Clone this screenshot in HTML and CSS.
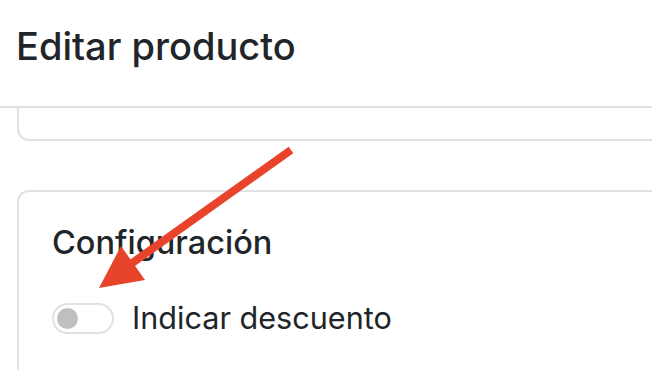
FILE: index.html
```html
<!DOCTYPE html>
<html lang="es">
<head>
<meta charset="utf-8">
<title>Editar producto</title>
<link rel="stylesheet" href="styles.css">
</head>
<body>
<div class="page">
  <header class="page-header">
    <h1 class="page-title">Editar producto</h1>
  </header>
  <main class="content">
    <section class="card card-cut"></section>
    <section class="card card-config">
      <h2 class="card-title">Configuración</h2>
      <label class="switch-row">
        <span class="switch"><span class="switch-knob"></span></span>
        <span class="switch-label">Indicar descuento</span>
      </label>
    </section>
  </main>
  <svg class="annotation" width="652" height="370" viewBox="0 0 652 370" aria-hidden="true">
    <line x1="291" y1="150" x2="128" y2="266" stroke="#e8442b" stroke-width="8"/>
    <polygon points="99,288 121,246 145,280" fill="#e8442b"/>
  </svg>
</div>
</body>
</html>
```
FILE: styles.css
```css
html, body {
  margin: 0;
  padding: 0;
  background: #ffffff;
}
body {
  font-family: Inter, Roboto, "Liberation Sans", Arial, sans-serif;
  color: #212529;
  overflow: hidden;
  width: 652px;
  height: 370px;
}
.page {
  position: relative;
  width: 652px;
  height: 370px;
  overflow: hidden;
}
.page-header {
  padding: 22px 16px 36px 16px;
  border-bottom: 2px solid #dee2e6;
}
.page-title {
  margin: 0;
  font-size: 38px;
  line-height: 48px;
  font-weight: 500;
}
.content {
  padding-left: 17px;
}
.card {
  border: 2px solid #dee2e6;
  border-radius: 12px;
  background: #fff;
  margin-right: -60px;
}
.card-cut {
  border-top: none;
  border-top-left-radius: 0;
  border-top-right-radius: 0;
  height: 31px;
}
.card-config {
  margin-top: 49px;
  padding: 32px 33px 40px 33px;
}
.card-title {
  margin: 0;
  font-size: 32.5px;
  line-height: 38px;
  font-weight: 500;
}
.switch-row {
  display: flex;
  align-items: center;
  gap: 18px;
  margin-top: 37px;
}
.switch {
  box-sizing: border-box;
  width: 62px;
  height: 31px;
  border: 2px solid #dee2e6;
  border-radius: 16px;
  display: flex;
  align-items: center;
  padding-left: 3px;
}
.switch-knob {
  width: 21px;
  height: 21px;
  border-radius: 50%;
  background: #bfbfbf;
}
.switch-label {
  font-size: 30.6px;
  line-height: 38px;
  font-weight: 400;
}
.annotation {
  position: absolute;
  left: 0;
  top: 0;
  pointer-events: none;
}
```
